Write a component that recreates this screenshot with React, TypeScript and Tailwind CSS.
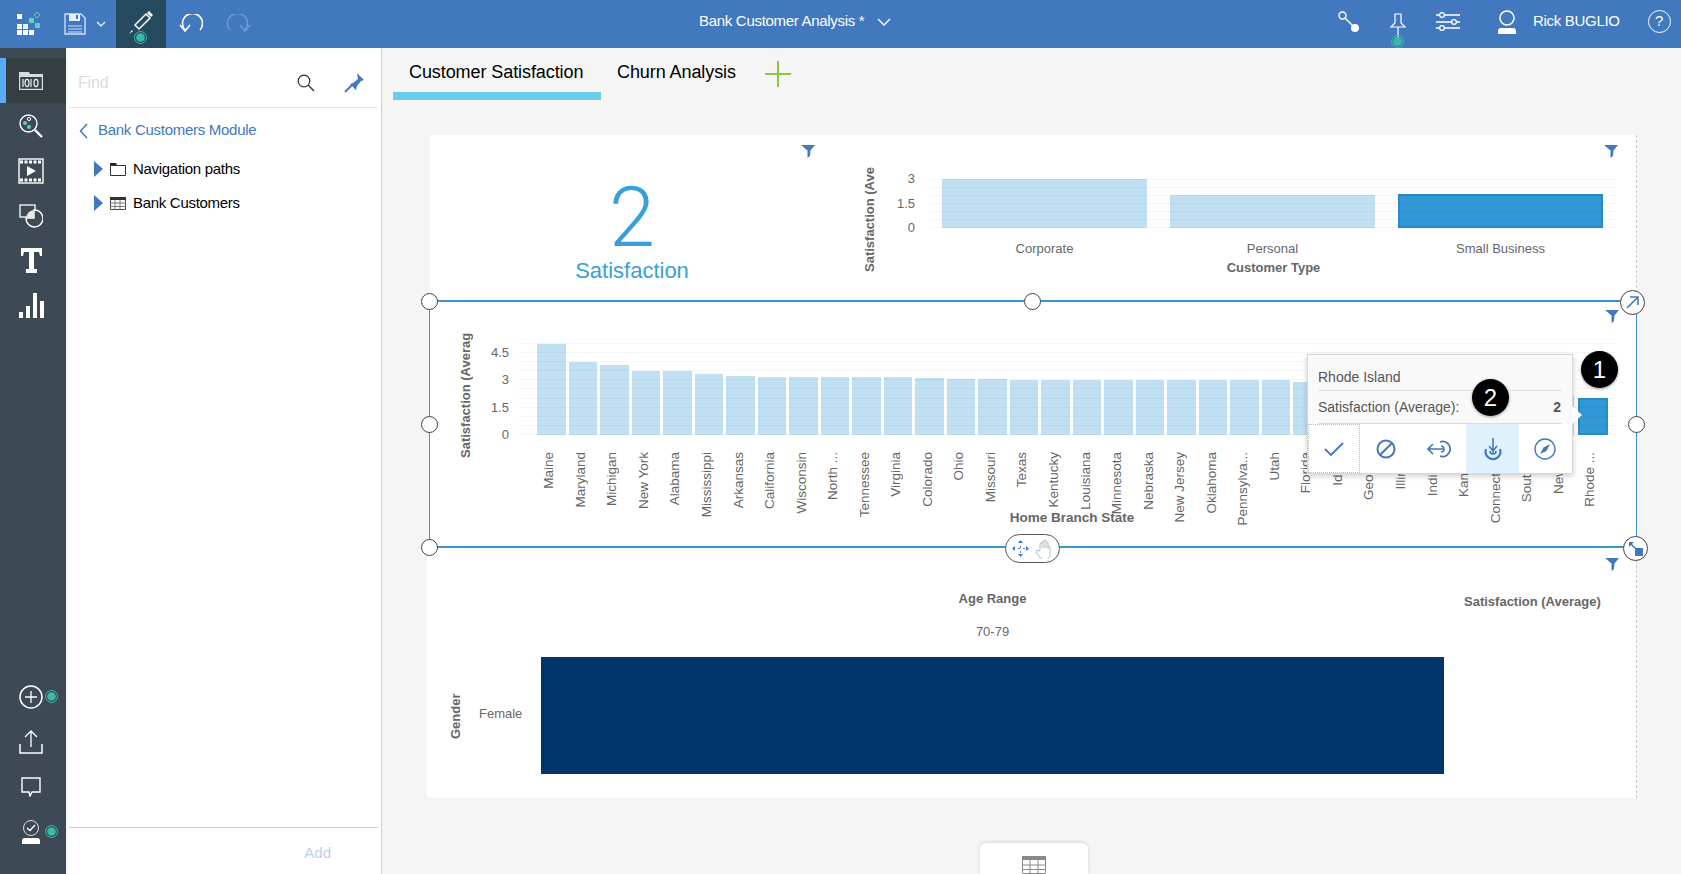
import type { ReactNode } from "react";

const FONT = "font-['Liberation_Sans',Arial,sans-serif]";

const STATES: [string, number][] = [
  ["Maine", 91], ["Maryland", 73], ["Michigan", 70], ["New York", 64], ["Alabama", 64], ["Mississippi", 61],
  ["Arkansas", 59], ["California", 58], ["Wisconsin", 58], ["North ...", 58], ["Tennessee", 58], ["Virginia", 58],
  ["Colorado", 57], ["Ohio", 56], ["Missouri", 56], ["Texas", 55], ["Kentucky", 55], ["Louisiana", 55],
  ["Minnesota", 55], ["Nebraska", 55], ["New Jersey", 55], ["Oklahoma", 55], ["Pennsylva...", 55], ["Utah", 55],
  ["Florida", 53], ["Idaho", 52], ["Georgia", 50], ["Illinois", 48], ["Indiana", 46], ["Kansas", 44],
  ["Connecticut", 42], ["South ...", 41], ["New ...", 40], ["Rhode ...", 37],
];

function Svg({ w, h = w, children, className = "" }: { w: number; h?: number; children: ReactNode; className?: string }) {
  return (
    <svg width={w} height={h} viewBox={`0 0 ${w} ${h}`} fill="none" className={className}>
      {children}
    </svg>
  );
}

function GreenDot({ size = 13 }: { size?: number }) {
  const c = size / 2;
  return (
    <Svg w={size}>
      <circle cx={c} cy={c} r={c - 0.5} stroke="#3ab9a8" />
      <circle cx={c} cy={c} r={c - 2.2} fill="#3ab9a8" />
    </Svg>
  );
}

function FilterIcon({ className = "" }: { className?: string }) {
  return (
    <svg width="14" height="14" viewBox="0 0 14 14" className={className}>
      <path d="M0 1h14L9.500 6.500 9 12l-2.500 2V6.500z" fill="#4178be" />
    </svg>
  );
}

function Handle({ className }: { className: string }) {
  return <div className={`absolute w-[17px] h-[17px] rounded-full bg-white border border-[#444] ${className}`} />;
}

function TopBar() {
  return (
    <header className="h-12 shrink-0 bg-[#4178be] flex items-center text-white">
      <div className="w-[116px] flex items-center pl-[17px] h-full">
        <Svg w={24} h={24}>
          <rect x="0" y="2" width="5" height="5" fill="#fff" />
          <rect x="12" y="6" width="5" height="5" fill="#5fd0c0" />
          <path d="M20 0l3 3-3 3-3-3z" stroke="#5fd0c0" />
          <rect x="0" y="12" width="5" height="5" fill="#fff" />
          <rect x="6" y="12" width="5" height="5" fill="#dff" />
          <rect x="18" y="11" width="5" height="5" fill="#5fd0c0" />
          <rect x="0" y="18" width="5" height="5" fill="#fff" />
          <rect x="6" y="18" width="5" height="5" fill="#fff" />
          <rect x="12" y="18" width="5" height="5" fill="#fff" />
        </Svg>
        <Svg w={22} h={22} className="ml-[23px]">
          <path d="M1 1h16l4 4v16H1z" fill="#4178be" stroke="#cfdff3" strokeWidth="1.4" />
          <path d="M5 1h11v7H5z" fill="#e6eef8" />
          <path d="M12 2h2v4h-2z" fill="#4178be" />
          <path d="M4 13h14M4 16h14M4 19h14" stroke="#cfdff3" strokeWidth="1.2" />
        </Svg>
        <Svg w={10} h={6} className="ml-[10px]">
          <path d="M1 1l4 4 4-4" stroke="#fff" strokeWidth="1.2" />
        </Svg>
      </div>
      <div className="w-[50px] h-full bg-[#264a60] relative pl-[13px] pt-[10px]">
        <Svg w={25} h={25}>
          <path d="M6 15L17 4l4 4-11 11z" stroke="#fff" strokeWidth="1.5" />
          <path d="M18 3l2-2 4 4-2 2z" fill="#fff" />
          <path d="M0 24l4-3-1-1z" fill="#fff" />
        </Svg>
        <div className="absolute left-[18px] top-[31px]">
          <GreenDot />
        </div>
      </div>
      <Svg w={24} h={20} className="ml-[13px]">
        <path d="M21 16A10 10 0 1 0 6 16" stroke="#fff" strokeWidth="1.6" />
        <path d="M1 11l5 6 5-6" stroke="#fff" strokeWidth="1.6" />
      </Svg>
      <Svg w={24} h={20} className="ml-[24px]">
        <path d="M3 16A10 10 0 1 1 18 16" stroke="#6a9ad6" strokeWidth="1.6" />
        <path d="M13 11l5 6 5-6" stroke="#6a9ad6" strokeWidth="1.6" />
      </Svg>
      <div className="ml-[448px] w-[165px] pb-[6px] text-[15px] tracking-[-0.3px] whitespace-nowrap">Bank Customer Analysis *</div>
      <Svg w={14} h={8} className="ml-[13px] mb-[5px]">
        <path d="M1 1l6 6 6-6" stroke="#fff" strokeWidth="1.4" />
      </Svg>
      <div className="ml-[447px] flex items-center pb-[5px]">
        <Svg w={22} h={22}>
          <circle cx="4.5" cy="4.5" r="3.5" stroke="#fff" strokeWidth="1.4" />
          <path d="M7 7l10 10" stroke="#fff" strokeWidth="1.4" />
          <circle cx="17" cy="17" r="4" fill="#fff" />
        </Svg>
        <div className="relative ml-[29px] w-[18px] h-[32px] mt-[15px]">
          <Svg w={18} h={30}>
            <path d="M6 1h6v9l4 4H2l4-4z" stroke="#fff" strokeWidth="1.2" />
            <path d="M9 14v11" stroke="#fff" strokeWidth="1.2" />
          </Svg>
          <div className="absolute left-[2px] top-[22px]">
            <GreenDot />
          </div>
        </div>
        <Svg w={24} h={20} className="ml-[29px]">
          <path d="M0 3h24M0 10h24M0 16h24" stroke="#fff" strokeWidth="1.3" />
          <circle cx="6" cy="3" r="2.4" fill="#4178be" stroke="#fff" strokeWidth="1.3" />
          <circle cx="18" cy="10" r="2.4" fill="#4178be" stroke="#fff" strokeWidth="1.3" />
          <circle cx="6" cy="16" r="2.4" fill="#4178be" stroke="#fff" strokeWidth="1.3" />
        </Svg>
        <Svg w={20} h={24} className="ml-[37px]">
          <circle cx="10" cy="8" r="7" stroke="#fff" strokeWidth="1.5" />
          <path d="M1 24v-3c0-2 1-3 3-3h12c2 0 3 1 3 3v3z" fill="#fff" />
        </Svg>
        <span className="ml-[16px] text-[15px] tracking-[-0.3px] whitespace-nowrap">Rick BUGLIO</span>
        <div className="ml-[28px] w-[23px] h-[23px] rounded-full border-[1.5px] border-white flex items-center justify-center text-[15px]">
          ?
        </div>
      </div>
    </header>
  );
}

function RailItem({ children, dot, active }: { children: ReactNode; dot?: boolean; active?: boolean }) {
  return (
    <div
      className={`relative h-[45px] flex items-center justify-center ${
        active ? "bg-[#343f44] border-l-[6px] border-[#5aaafa] pr-[10px]" : "pr-[4px]"
      }`}
    >
      {children}
      {dot && (
        <div className="absolute left-[45px] top-[16px]">
          <GreenDot />
        </div>
      )}
    </div>
  );
}

function LeftRail() {
  return (
    <nav className="w-[66px] shrink-0 bg-[#3d4a55] pt-[10px] pb-[20px] flex flex-col justify-between">
      <div className="flex flex-col">
        <RailItem active>
          <Svg w={24} h={18}>
            <path d="M0 0h10l1 2h13v16H0z" fill="#d8dcdf" />
            <rect x="1.2" y="5" width="21.6" height="11.8" fill="#3a4549" />
            <path d="M4 7v8M12 7v8" stroke="#eee" strokeWidth="1.2" />
            <ellipse cx="8" cy="11" rx="2" ry="3.6" stroke="#eee" strokeWidth="1.2" />
            <ellipse cx="17" cy="11" rx="2" ry="3.6" stroke="#eee" strokeWidth="1.2" />
          </Svg>
        </RailItem>
        <RailItem>
          <Svg w={24} h={24}>
            <circle cx="9.5" cy="9.5" r="8.5" stroke="#fff" strokeWidth="1.4" />
            <path d="M16 16l7 7" stroke="#fff" strokeWidth="2.4" />
            <circle cx="6" cy="9" r="2" fill="#5fd0c0" />
            <circle cx="10" cy="13" r="2" fill="#5fd0c0" />
            <circle cx="10" cy="5" r="1.6" stroke="#fff" />
          </Svg>
        </RailItem>
        <RailItem>
          <Svg w={26} h={26}>
            <rect x="1" y="1" width="24" height="24" stroke="#fff" strokeWidth="1.4" />
            <path d="M2 4h22M2 22h22" stroke="#fff" strokeWidth="3" strokeDasharray="3 1.5" />
            <path d="M9 8l9 5-9 5z" fill="#fff" />
          </Svg>
        </RailItem>
        <RailItem>
          <Svg w={24} h={24}>
            <rect x="1" y="1" width="15" height="12" stroke="#fff" strokeWidth="1.3" />
            <path d="M15 6a8.5 8.5 0 1 1-8 8h8z" fill="#3d4a55" stroke="#fff" strokeWidth="1.4" />
            <path d="M15 6a8.5 8.5 0 0 0-8 8h8z" fill="#e8e8e8" />
          </Svg>
        </RailItem>
        <RailItem>
          <Svg w={21} h={25}>
            <path d="M0 0h21v8h-2l-1-4h-5v17h3v4H5v-4h3V4H3L2 8H0z" fill="#fff" />
          </Svg>
        </RailItem>
        <RailItem>
          <Svg w={25} h={25}>
            <path d="M0 19h4v6H0zM7 13h4v12H7zM14 0h4v25h-4zM21 8h4v17h-4z" fill="#fff" />
          </Svg>
        </RailItem>
      </div>
      <div className="flex flex-col">
        <RailItem dot>
          <Svg w={24} h={24}>
            <circle cx="12" cy="12" r="11" stroke="#fff" strokeWidth="1.5" />
            <path d="M12 6v12M6 12h12" stroke="#fff" strokeWidth="1.3" />
          </Svg>
        </RailItem>
        <RailItem>
          <Svg w={24} h={24}>
            <path d="M12 1v16M6 7l6-6 6 6" stroke="#fff" strokeWidth="1.3" />
            <path d="M1 14v9h22v-9" stroke="#fff" strokeWidth="1.5" />
          </Svg>
        </RailItem>
        <RailItem>
          <Svg w={20} h={20}>
            <path d="M1 1h18v14H11l-2 4-1-4H1z" stroke="#fff" strokeWidth="1.4" />
          </Svg>
        </RailItem>
        <RailItem dot>
          <Svg w={20} h={24}>
            <circle cx="10" cy="8" r="7.5" stroke="#ddd" strokeWidth="1" />
            <path d="M6 8l3 2.5L14 5" stroke="#fff" strokeWidth="1.4" />
            <path d="M1 24v-3c0-2 1-3 3-3h12c2 0 3 1 3 3v3z" fill="#fff" />
          </Svg>
        </RailItem>
      </div>
    </nav>
  );
}

function TreeRow({ label, icon }: { label: string; icon: ReactNode }) {
  return (
    <div className="h-[34px] flex items-center pl-[28px] text-[15px] tracking-[-0.3px] text-black">
      <svg width="9" height="16" viewBox="0 0 9 16">
        <path d="M0 0l9 8-9 8z" fill="#4178be" />
      </svg>
      <span className="ml-[7px] w-[16px] flex">{icon}</span>
      <span className="ml-[7px]">{label}</span>
    </div>
  );
}

function SidePanel() {
  return (
    <aside className="w-[316px] shrink-0 bg-white border-r border-[#ccc] flex flex-col shadow-[inset_2px_0_2px_-1px_rgba(0,0,0,0.06)]">
      <div className="mx-[3px] h-[60px] border-b border-[#e8e8e8] flex items-center pl-[9px] pt-[10px] shrink-0">
        <span className="text-[16px] text-[#dcdcdc] tracking-[-0.2px]">Find</span>
        <Svg w={18} h={18} className="ml-[189px]">
          <circle cx="7" cy="7" r="5.8" stroke="#333" strokeWidth="1.2" />
          <path d="M11 11l6 6" stroke="#444" strokeWidth="1.6" />
        </Svg>
        <Svg w={20} h={20} className="ml-[29px]">
          <path d="M13 0l7 7-3 1-4 5-1 4-6-6 3-1 5-4z" fill="#4178be" />
          <path d="M8 12l-7 7" stroke="#4178be" strokeWidth="2" />
        </Svg>
      </div>
      <div className="h-[41px] flex items-center pl-[13px] pt-[4px] shrink-0 text-[15px] tracking-[-0.28px] text-[#4178be]">
        <Svg w={9} h={16}>
          <path d="M8 1L1.5 8 8 15" stroke="#4178be" strokeWidth="1.5" />
        </Svg>
        <span className="ml-[10px]">Bank Customers Module</span>
      </div>
      <div className="pt-[3px] flex-1">
        <TreeRow
          label="Navigation paths"
          icon={
            <Svg w={16} h={13}>
              <path d="M.5 2.5h15v10H.5z" stroke="#333" />
              <path d="M0 0h6l1 2H0z" fill="#222" />
            </Svg>
          }
        />
        <TreeRow
          label="Bank Customers"
          icon={
            <Svg w={16} h={13}>
              <path d="M.5.5h15v12H.5z" stroke="#444" />
              <path d="M0 0h16v3H0z" fill="#333" />
              <path d="M0 6h16M0 9.500h16M5 3v10M10 3v10" stroke="#777" />
            </Svg>
          }
        />
      </div>
      <div className="mx-[3px] h-[47px] border-t border-[#ccc] shrink-0 flex justify-end items-center pr-[47px] pt-[5px] text-[15px] text-[#bcd0ec]">
        Add
      </div>
    </aside>
  );
}

function Tabs() {
  return (
    <div className="h-[52px] pl-[11px] flex items-start">
      <div className="w-[208px] h-[52px] border-b-[8px] border-[#68cde5] pl-[16px] pt-[11px] text-[18px] tracking-[-0.08px] text-black whitespace-nowrap">
        Customer Satisfaction
      </div>
      <div className="ml-[16px] pt-[11px] text-[18px] tracking-[-0.08px] text-black whitespace-nowrap">Churn Analysis</div>
      <Svg w={26} h={26} className="ml-[29px] mt-[13px]">
        <path d="M0 13h26M13 0v26" stroke="#8cc63f" strokeWidth="2" />
      </Svg>
    </div>
  );
}

function GridLines({ count }: { count: number }) {
  return (
    <div className="absolute inset-0 flex flex-col justify-between pointer-events-none">
      {Array.from({ length: count }).map((_, i) => (
        <div key={i} className="h-px bg-[rgba(0,0,0,0.035)]" />
      ))}
    </div>
  );
}

function VerticalTitle({ text, className }: { text: string; className: string }) {
  return (
    <div className={`[writing-mode:vertical-rl] rotate-180 font-bold text-[13px] text-[#666] whitespace-nowrap leading-[20px] w-[20px] ${className}`}>
      {text}
    </div>
  );
}

function TopWidget() {
  const bars = [
    { label: "Corporate", h: 49, on: false },
    { label: "Personal", h: 33, on: false },
    { label: "Small Business", h: 34, on: true },
  ];
  return (
    <div className="relative h-[165px] flex">
      <FilterIcon className="absolute left-[371px] top-[9px]" />
      <FilterIcon className="absolute left-[1174px] top-[9px]" />
      <div className="w-[404px] flex flex-col items-center pt-[38px] text-[#3a9fd8]">
        <div className="text-[83px] leading-[90px] font-light font-['Roboto',sans-serif]">2</div>
        <div className="text-[22px] leading-[28px] font-light -mt-[6px]">Satisfaction</div>
      </div>
      <div className="pl-[26px] pt-[30px] flex">
        <VerticalTitle text="Satisfaction (Ave" className="h-[107px] overflow-hidden" />
        <div className="w-[35px] mt-[7px] h-[63px] flex flex-col justify-between items-end text-[13px] leading-[14px] text-[#666]">
          <span>3</span>
          <span>1.5</span>
          <span>0</span>
        </div>
        <div className="ml-[16px] w-[685px] mt-[14px]">
          <div className="relative h-[49px] flex items-end gap-[23px] px-[11px]">
            {bars.map((b) => (
              <div
                key={b.label}
                style={{ height: b.h }}
                className={`w-[205px] ${b.on ? "bg-[#3098d4] border-2 border-[#2a8cc6]" : "bg-[#c1dff2]"}`}
              />
            ))}
            <GridLines count={7} />
          </div>
          <div className="flex gap-[23px] px-[11px] mt-[13px] text-[13px] leading-[15px] text-[#666]">
            {bars.map((b) => (
              <div key={b.label} className="w-[205px] text-center">
                {b.label}
              </div>
            ))}
          </div>
          <div className="mt-[4px] text-center font-bold text-[13px] leading-[15px] text-[#666]">Customer Type</div>
        </div>
      </div>
    </div>
  );
}

function Tooltip() {
  return (
    <div className="absolute left-[877px] top-[52px] w-[266px] h-[120px] bg-[#f9f9f9] border border-[#d8d8d8] shadow-[0_2px_6px_rgba(0,0,0,0.2)] text-[14px] text-[#555]">
      <div className="mx-[10px] h-[36px] pt-[13px] leading-[18px] border-b border-[#ddd]">Rhode Island</div>
      <div className="mx-[10px] h-[33px] flex items-center justify-between border-b border-[#ddd]">
        <span>Satisfaction (Average):</span>
        <span className="font-bold pr-[1px]">2</span>
      </div>
      <div className="h-[49px] bg-white flex">
        <div className="w-[52px] border border-dotted border-[#bbb] flex items-center justify-center">
          <Svg w={20} h={16}>
            <path d="M1 8l6 6L19 2" stroke="#4178be" strokeWidth="1.8" />
          </Svg>
        </div>
        <div className="w-[52px] flex items-center justify-center">
          <Svg w={20} h={20}>
            <circle cx="10" cy="10" r="8.500" stroke="#4178be" strokeWidth="2" />
            <path d="M4 16L16 4" stroke="#4178be" strokeWidth="2" />
          </Svg>
        </div>
        <div className="w-[54px] flex items-center justify-center">
          <Svg w={24} h={20}>
            <path d="M13 3a7.500 7.500 0 1 1 0 14" stroke="#4178be" strokeWidth="1.8" />
            <path d="M14 7a3 3 0 1 1 0 6M1 10h16M6 5l-5 5 5 5" stroke="#4178be" strokeWidth="1.6" />
          </Svg>
        </div>
        <div className="w-[53px] bg-[#dff1fa] flex items-center justify-center">
          <Svg w={20} h={24}>
            <path d="M3 12a7.500 7.500 0 1 0 14 0" stroke="#4178be" strokeWidth="2" />
            <path d="M7 14a3 3 0 1 0 6 0M10 1v15M6 9l4 5 4-5" stroke="#4178be" strokeWidth="1.6" />
          </Svg>
        </div>
        <div className="w-[52px] flex items-center justify-center">
          <Svg w={22} h={22}>
            <circle cx="11" cy="11" r="10" stroke="#4178be" strokeWidth="1.4" />
            <path d="M16 6l-3.500 7L6 16l3.500-6.500z" fill="#4178be" />
          </Svg>
        </div>
      </div>
      <div className="absolute right-[-10px] top-[51px] w-0 h-0 border-y-[9px] border-y-transparent border-l-[10px] border-l-white" />
    </div>
  );
}

function Badge({ n, className }: { n: number; className: string }) {
  return (
    <div
      className={`absolute w-[37px] h-[37px] rounded-full bg-black text-white flex items-center justify-center text-[24px] shadow-[0_1px_3px_rgba(0,0,0,0.4)] ${className}`}
    >
      {n}
    </div>
  );
}

function MiddleWidget() {
  return (
    <div className="relative z-10 h-[248px] border-y-2 border-x border-[#3a95c8] -mx-px">
      <div className="flex pl-[26px] pt-[31px]">
        <VerticalTitle text="Satisfaction (Averag" className="h-[128px] overflow-hidden -mt-[3px]" />
        <div className="w-[33px] mt-[13px] h-[96px] flex flex-col justify-between items-end text-[13px] leading-[14px] text-[#666]">
          <span>4.5</span>
          <span>3</span>
          <span>1.5</span>
          <span>0</span>
        </div>
        <div className="ml-[8px] w-[1100px] mt-[10px]">
          <div className="relative h-[92px] flex items-end gap-[3px] pl-[20px]">
            {STATES.map(([name, h], i) => (
              <div
                key={name}
                style={{ height: h }}
                className={`shrink-0 ${i === STATES.length - 1 ? "bg-[#3098d4] border-2 border-[#2a8cc6] w-[30px] ml-[1px]" : "w-[28.5px] bg-[#c1dff2]"}`}
              />
            ))}
            <GridLines count={11} />
          </div>
          <div className="flex gap-[3.06px] pl-[18px] mt-[17px]">
            {STATES.map(([name]) => (
              <div key={name} className="w-[28.5px] shrink-0 flex justify-center items-start h-[72px]">
                <span className="[writing-mode:vertical-rl] rotate-180 text-[13.5px] leading-[16px] text-[#666] whitespace-nowrap">
                  {name}
                </span>
              </div>
            ))}
          </div>
        </div>
      </div>
      <div className="absolute left-[484px] top-[208px] w-[316px] text-center font-bold text-[13.5px] leading-[16px] text-[#666] whitespace-nowrap">
        Home Branch State
      </div>
      <FilterIcon className="absolute left-[1175px] top-[7px]" />
      <Tooltip />
      <Badge n={1} className="left-[1151px] top-[49px]" />
      <Badge n={2} className="left-[1042px] top-[77px]" />
      <Handle className="-left-[9px] -top-[9px]" />
      <Handle className="left-[594px] -top-[9px]" />
      <Handle className="-left-[9px] top-[114px]" />
      <Handle className="left-[1198px] top-[114px]" />
      <Handle className="-left-[9px] top-[237px]" />
      <div className="absolute left-[1190px] -top-[12px] w-[25px] h-[25px] rounded-full bg-white border border-[#444] flex items-center justify-center">
        <Svg w={13} h={13}>
          <path d="M1 12L12 1M4 1h8v8" stroke="#4178be" strokeWidth="1.6" />
        </Svg>
      </div>
      <div className="absolute left-[1193px] top-[234px] w-[25px] h-[25px] rounded-full bg-white border border-[#444] flex items-center justify-center">
        <Svg w={15} h={15}>
          <path d="M1 1h5L1 6z" fill="#4178be" />
          <path d="M2 2l6 6" stroke="#4178be" strokeWidth="1.5" />
          <rect x="7" y="7" width="8" height="8" fill="#4178be" />
        </Svg>
      </div>
      <div className="absolute left-[575px] top-[232px] w-[55px] h-[29px] rounded-full bg-white border border-[#555] flex items-center justify-center gap-[7px]">
        <Svg w={17} h={17}>
          <path d="M8.500 1v15M1 8.500h15" stroke="#4178be" strokeWidth="1" strokeDasharray="2 3" />
          <path d="M8.500 0l2.500 3H6zM8.500 17l2.500-3H6zM0 8.500l3-2.500v5zM17 8.500l-3-2.500v5z" fill="#4178be" />
        </Svg>
        <Svg w={18} h={20}>
          <path d="M4 11V5a1 1 0 0 1 2 0v4-6a1 1 0 0 1 2 0v6-7a1 1 0 0 1 2 0v7-5a1 1 0 0 1 2 0v6-2a1 1 0 0 1 2 0v6c0 4-2 7-5 7s-4-1-6-4l-3-4c0-2 2-2 3-1z" stroke="#b4c6c9" strokeWidth="1.1" />
        </Svg>
      </div>
    </div>
  );
}

function BottomWidget() {
  return (
    <div className="relative h-[250px] -ml-[3px] bg-white rounded-bl-[3px] text-[#666]">
      <FilterIcon className="absolute left-[1178px] top-[9px]" />
      <div className="flex pt-[43px] pl-[3px]">
        <div className="w-[1014px] pl-[111px] flex flex-col items-center">
          <div className="font-bold text-[13px] leading-[16px]">Age Range</div>
          <div className="mt-[17px] text-[13px] leading-[16px]">70-79</div>
        </div>
        <div className="ml-[20px] mt-[3px] font-bold text-[13px] leading-[16px] whitespace-nowrap">Satisfaction (Average)</div>
      </div>
      <div className="mt-[17px] flex items-center pl-[19px]">
        <VerticalTitle text="Gender" className="h-[47px]" />
        <span className="ml-[13px] text-[13px] w-[62px] -mt-[3px]">Female</span>
        <div className="w-[903px] h-[117px] bg-[#00366b]" />
      </div>
    </div>
  );
}

export default function App() {
  return (
    <div className={`${FONT} h-screen w-full flex flex-col overflow-hidden bg-[#f5f5f5]`}>
      <TopBar />
      <div className="flex-1 flex min-h-0">
        <LeftRail />
        <SidePanel />
        <main className="relative flex-1 min-w-0">
          <Tabs />
          <div className="ml-[48px] mt-[35px] w-[1207px] h-[663px] bg-white border-r border-dashed border-[#ccc] rounded-tl-[3px]">
            <TopWidget />
            <MiddleWidget />
            <BottomWidget />
          </div>
          <div className="absolute left-[598px] bottom-0 w-[108px] h-[31px] bg-white rounded-t-[6px] shadow-[0_-1px_4px_rgba(0,0,0,0.12)] flex items-end justify-center">
            <Svg w={24} h={18}>
              <path d="M.5.5h23v17H.5z" stroke="#8a8a8a" />
              <path d="M0 0h24v4H0z" fill="#8a8a8a" />
              <path d="M0 9h24M0 13.500h24M8 4v14M16 4v14" stroke="#8a8a8a" />
            </Svg>
          </div>
        </main>
      </div>
    </div>
  );
}
